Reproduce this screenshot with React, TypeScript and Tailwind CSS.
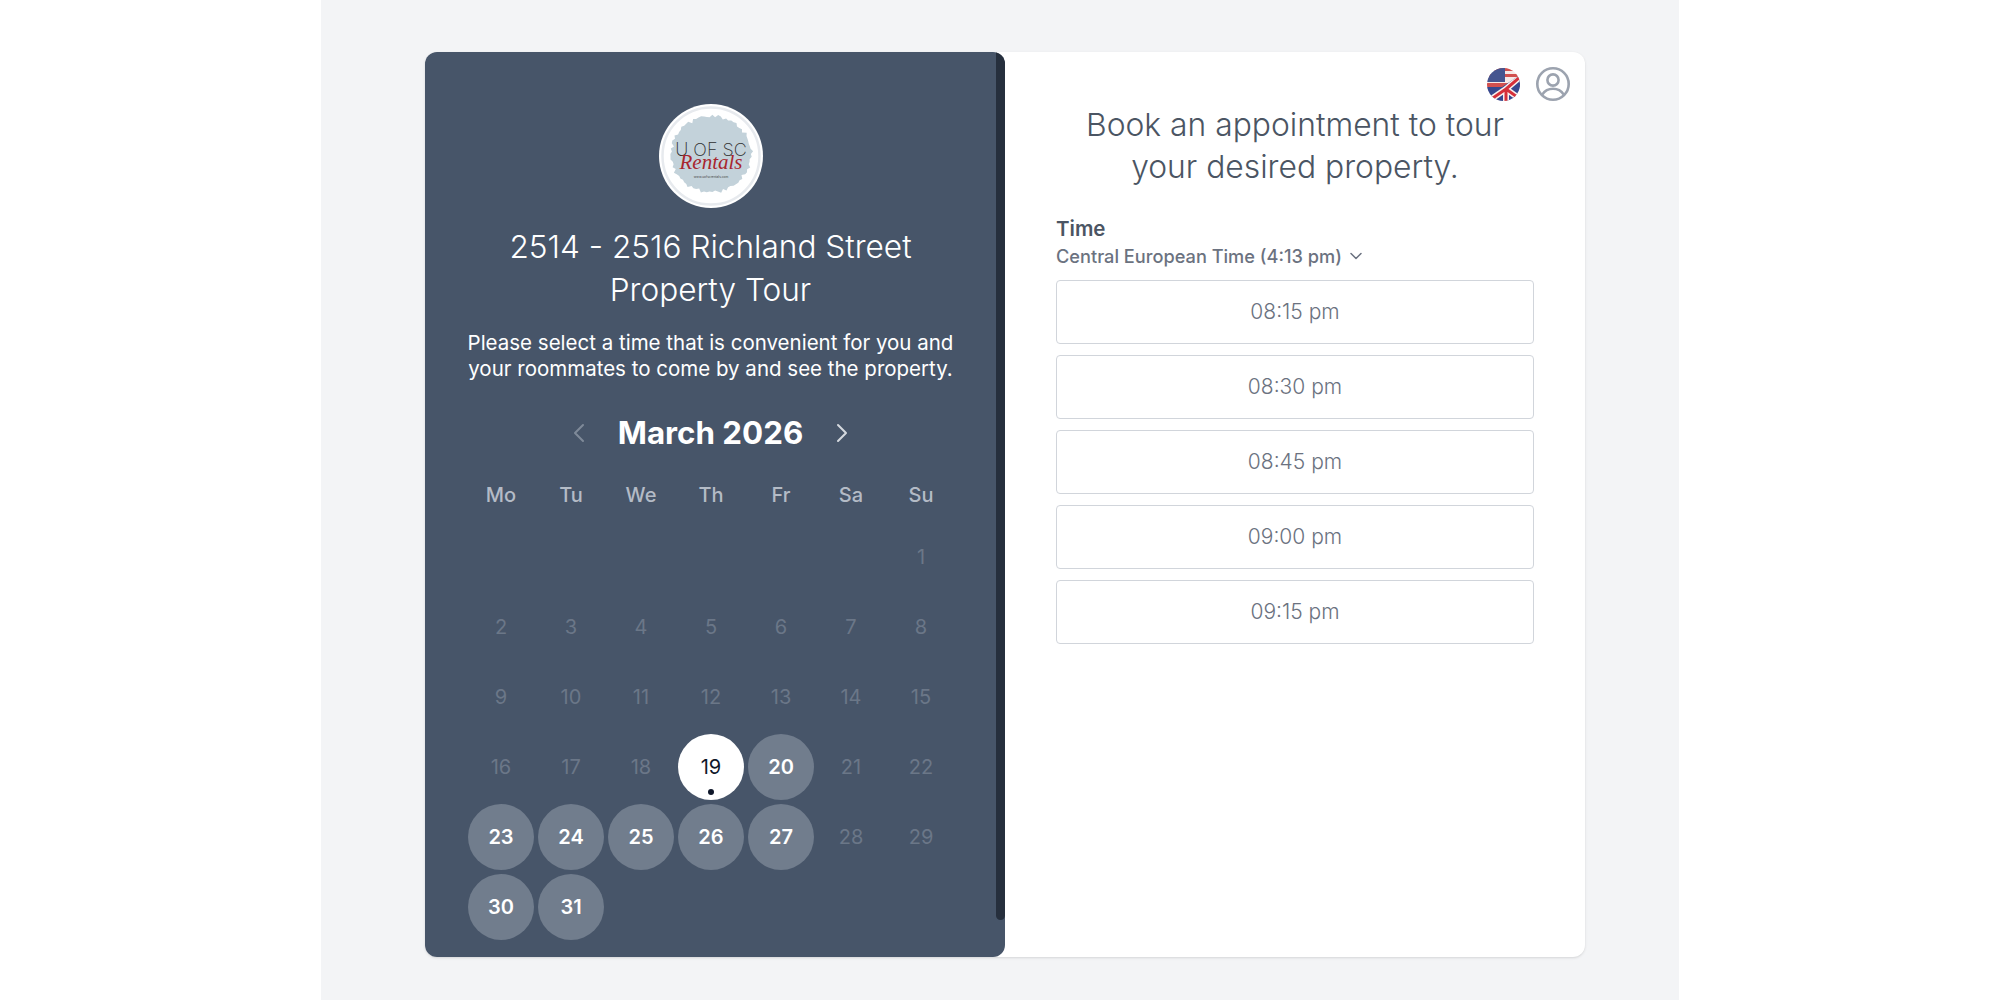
import { ChevronDown, ChevronLeft, ChevronRight } from "lucide-react";

const weekDays = ["Mo", "Tu", "We", "Th", "Fr", "Sa", "Su"];
const slots = ["08:15 pm", "08:30 pm", "08:45 pm", "09:00 pm", "09:15 pm"];
const available = [20, 23, 24, 25, 26, 27, 30, 31];

// rough brush edge for the logo blob
const blobPoints = Array.from({ length: 90 }, (_, i) => {
  const a = (i / 90) * Math.PI * 2;
  const r = 1 + 0.025 * Math.sin(i * 2.7) + 0.02 * Math.sin(i * 5.3 + 1) + (i % 3 === 0 ? -0.02 : 0.01);
  return `${(52 + 40 * r * Math.cos(a)).toFixed(1)},${(50 + 38 * r * Math.sin(a)).toFixed(1)}`;
}).join(" ");

function Logo() {
  return (
    <div className="h-[104px] w-[104px] rounded-full bg-white">
      <svg viewBox="0 0 104 104" className="h-[104px] w-[104px]">
        <circle cx="52" cy="52" r="48.5" fill="none" stroke="#e7eaee" strokeWidth="2.5" />
        <polygon points={blobPoints} fill="#c3d2da" />
        <text x="52" y="52" textAnchor="middle" fontSize="18" fontFamily="Inter, sans-serif" fontWeight="200" fill="#2f2f2f">
          U OF SC
        </text>
        <text x="52" y="65" textAnchor="middle" fontSize="21" fontStyle="italic" fontFamily="Liberation Serif, serif" fill="#a8262e">
          Rentals
        </text>
        <text x="52" y="74" textAnchor="middle" fontSize="3.2" fontFamily="Inter, sans-serif" fill="#444">
          www.uofscrentals.com
        </text>
      </svg>
    </div>
  );
}

function Flag() {
  return (
    <svg viewBox="0 0 33 33" className="h-[33px] w-[33px]">
      <defs>
        <clipPath id="flagCircle">
          <circle cx="16.5" cy="16.5" r="16.5" />
        </clipPath>
        <clipPath id="ukSide">
          <path d="M0 19 L15 19 L33 7 L33 33 L0 33 Z" />
        </clipPath>
      </defs>
      <g clipPath="url(#flagCircle)">
        <rect width="33" height="33" fill="#f6e9e7" />
        <rect width="33" height="3" fill="#d2504f" />
        <rect y="6" width="33" height="3" fill="#d2504f" />
        <rect y="15" width="33" height="4" fill="#d2504f" />
        <rect width="18" height="14" fill="#46558f" />
        <g clipPath="url(#ukSide)">
          <rect width="33" height="33" fill="#36488f" />
          <path d="M19 21 L0 34 M19 21 L33 9 M19 21 L33 31 M19 21 L19 33" stroke="#f8f0ee" strokeWidth="6" />
          <path d="M19 21 L0 34 M19 21 L33 9 M19 21 L33 31 M19 21 L19 33" stroke="#d5303a" strokeWidth="3" />
        </g>
      </g>
    </svg>
  );
}

function UserIcon() {
  return (
    <svg viewBox="0 0 36 36" fill="none" stroke="#9ca3af" strokeWidth="2.6" className="h-[36px] w-[36px]">
      <circle cx="18" cy="18" r="15.7" />
      <circle cx="18" cy="14" r="5.6" />
      <path d="M7.2 28.6 C10 24.4 13.6 22.8 18 22.8 C22.4 22.8 26 24.4 28.8 28.6" strokeLinecap="round" />
    </svg>
  );
}

function Day({ day }: { day: number }) {
  const base = "flex h-[66px] w-[66px] items-center justify-center rounded-full text-[20px]";
  if (day === 19) {
    return (
      <div className={`${base} relative bg-white font-normal text-[#0f172a]`}>
        19
        <span className="absolute bottom-[5px] left-[30px] h-[6px] w-[6px] rounded-full bg-[#0f172a]" />
      </div>
    );
  }
  if (available.includes(day)) {
    return <div className={`${base} bg-[#717d8d] font-semibold text-white`}>{day}</div>;
  }
  return <div className={`${base} text-[#6b7788]`}>{day}</div>;
}

export default function App() {
  const days = Array.from({ length: 31 }, (_, i) => i + 1);

  return (
    <div className="flex min-h-[1000px] justify-center bg-white font-['Inter',sans-serif]">
      <div className="flex h-[1000px] w-[1358px] justify-center bg-[#f3f4f6] pt-[52px] pl-[10px]">
        <div className="flex h-[905px] w-[1160px] rounded-xl bg-white shadow">
          <div className="flex w-[580px] overflow-hidden rounded-xl bg-[#475569]">
            <div className="flex w-[571px] flex-col items-center pt-[52px]">
              <Logo />
              <h1 className="mt-[17px] w-[500px] text-center text-[31.6px] leading-[43px] font-light text-white">
                2514 - 2516 Richland Street Property Tour
              </h1>
              <p className="mt-[19px] w-[510px] text-center text-[20.5px] leading-[26px] text-white">
                Please select a time that is convenient for you and your roommates to come by and see the property.
              </p>
              <div className="mt-[31px] flex items-center gap-[23px]">
                <ChevronLeft className="h-[32px] w-[32px] text-[#7f8a99]" strokeWidth={1.5} />
                <div className="text-[31.3px] leading-[40px] font-bold text-white">March 2026</div>
                <ChevronRight className="h-[32px] w-[32px] text-[#d5d9df]" strokeWidth={1.5} />
              </div>
              <div className="mt-[28px] ml-[1px] grid w-[490px] grid-cols-7 text-center text-[20px] font-medium text-[#b4bbc6]">
                {weekDays.map((d) => (
                  <div key={d} className="leading-[28px]">
                    {d}
                  </div>
                ))}
              </div>
              <div className="mt-[15px] ml-[1px] grid w-[490px] grid-cols-7 gap-y-[4px] justify-items-center">
                {Array.from({ length: 6 }, (_, i) => (
                  <div key={i} className="h-[66px] w-[66px]" />
                ))}
                {days.map((d) => (
                  <Day key={d} day={d} />
                ))}
              </div>
            </div>
            <div className="h-[868px] w-[9px] rounded-b-md rounded-tr-md bg-[#262f3d]" />
          </div>
          <div className="relative flex flex-1 flex-col px-[51px] pt-[52px]">
            <div className="absolute top-[14px] right-[14px] flex items-center gap-[15px]">
              <Flag />
              <UserIcon />
            </div>
            <h2 className="text-center text-[31.8px] leading-[42px] font-light text-[#4b5563]">
              Book an appointment to tour your desired property.
            </h2>
            <div className="mt-[26.5px] text-[20.5px] leading-[28px] font-semibold text-[#4b5563]">Time</div>
            <div className="mt-[1px] flex items-center gap-[4px] text-[18.2px] leading-[24px] font-medium text-[#6b7280]">
              Central European Time (4:13 pm)
              <ChevronDown className="h-[20px] w-[20px]" strokeWidth={1.8} />
            </div>
            <div className="mt-[12px] flex flex-col gap-[11px]">
              {slots.map((s) => (
                <div
                  key={s}
                  className="flex h-[64px] items-center justify-center rounded border-[1.5px] border-[#d1d5db] text-[21px] font-light text-[#6b7280]"
                >
                  {s}
                </div>
              ))}
            </div>
          </div>
        </div>
      </div>
    </div>
  );
}
